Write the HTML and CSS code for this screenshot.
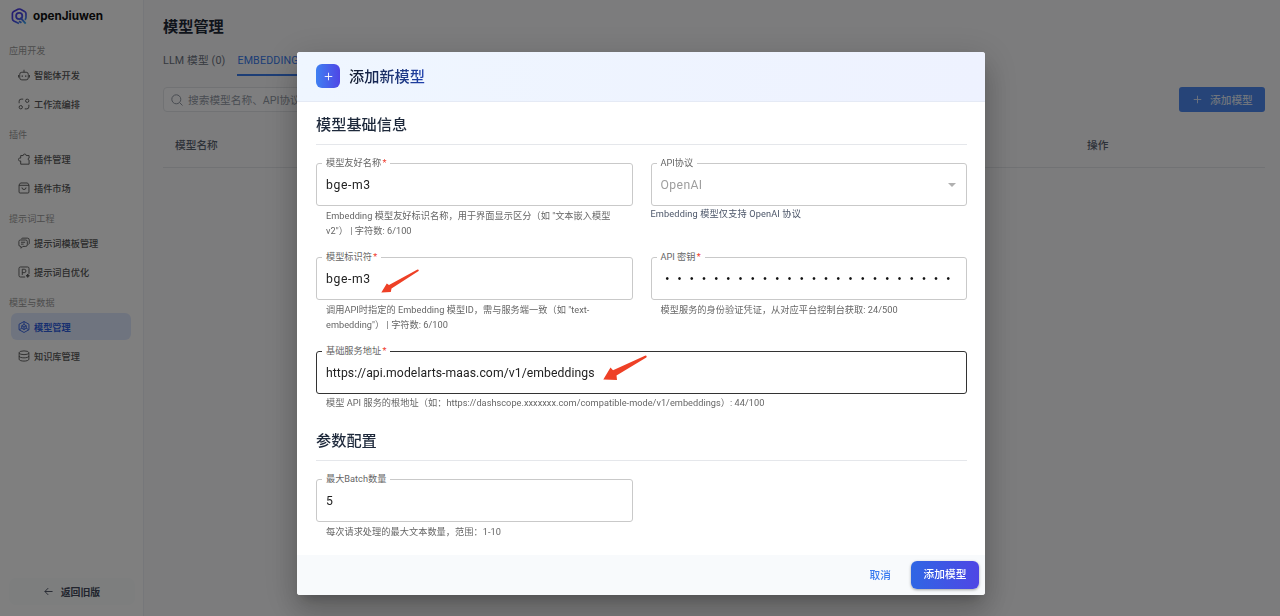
FILE: index.html
```html
<!DOCTYPE html>
<html lang="zh-CN">
<head>
    <meta charset="UTF-8">
    <meta name="viewport" content="width=device-width, initial-scale=1.0">
    <title>模型管理 - openJiuwen</title>
    <link rel="stylesheet" href="styles.css">
</head>
<body>
    <div class="app">
        <aside class="sidebar">
            <div class="logo">
                <svg width="17" height="17" viewBox="0 0 17 17" fill="none">
                    <defs>
                        <linearGradient id="logoGrad" x1="3" y1="1" x2="15" y2="17" gradientUnits="userSpaceOnUse">
                            <stop offset="0" stop-color="#4a35e0"/>
                            <stop offset="0.55" stop-color="#4a50e8"/>
                            <stop offset="1" stop-color="#35c0f0"/>
                        </linearGradient>
                    </defs>
                    <path d="M8 15.5L2.8 12.9Q1.4 12.2 1.4 10.7V5.6Q1.4 4.2 2.7 3.5L7 1.3Q8.3.7 9.6 1.3L13.6 3.5Q15 4.2 15 5.7V9.5Q15 11 13.8 11.8" stroke="url(#logoGrad)" stroke-width="1.7"/>
                    <circle cx="8.2" cy="8" r="3.1" stroke="url(#logoGrad)" stroke-width="1.8"/>
                    <path d="M9.4 9.7L14.7 15.6M8 13.2L10.5 14.8" stroke="url(#logoGrad)" stroke-width="1.9"/>
                </svg>
                <span>openJiuwen</span>
            </div>

            <nav class="menu">
                <div class="menu-title">应用开发</div>
                <a class="menu-item">
                    <svg viewBox="0 0 16 16"><rect x="2.3" y="4.3" width="11.4" height="10.2" rx="2.8"/><path d="M8 4.3V1M.6 8v3.4M15.4 8v3.4"/><path d="M5.7 8.6v1.7M10.3 8.6v1.7" stroke-width="1.7"/></svg>
                    <span>智能体开发</span>
                </a>
                <a class="menu-item">
                    <svg viewBox="0 0 16 16"><circle cx="12.3" cy="3.7" r="2.2"/><circle cx="3.7" cy="12.3" r="2.2"/><path d="M7 1.5H4.2Q1.5 1.5 1.5 4.2V7M9 14.5h2.8q2.7 0 2.7-2.7V9"/></svg>
                    <span>工作流编排</span>
                </a>

                <div class="menu-title">插件</div>
                <a class="menu-item">
                    <svg viewBox="0 0 16 16"><path d="M3.6 3.4h3.3a2 2 0 1 1 4 0h3.9v3.4a1.3 1.3 0 1 0 0 2.600v5.500H3.600v-4.300a2.100 2.100 0 1 1 0-3.800z"/></svg>
                    <span>插件管理</span>
                </a>
                <a class="menu-item">
                    <svg viewBox="0 0 16 16"><path d="M3.3 1.3h9.4l1.9 2.6v9.4q0 1.4-1.4 1.4H2.8q-1.4 0-1.4-1.4V3.9zM1.4 4.4h13.2M5.3 7.3a2.7 2.7 0 0 0 5.4 0"/></svg>
                    <span>插件市场</span>
                </a>

                <div class="menu-title">提示词工程</div>
                <a class="menu-item">
                    <svg viewBox="0 0 16 16"><path d="M3.2 4h7.2q2 0 2 2v4.5q0 2-2 2H6.5L4 15v-2.5h-.8q-2 0-2-2V6q0-2 2-2zM4 7h5.5M4 9.5h3.5M4.5 2.3q.5-.8 2-.8h6q2.5 0 2.500 2.500v4q0 1.500-1 2"/></svg>
                    <span>提示词模板管理</span>
                </a>
                <a class="menu-item">
                    <svg viewBox="0 0 16 16"><path d="M9.5 14.7H3.3q-2 0-2-2V3.3q0-2 2-2h9.4q2 0 2 2v7.2M5.7 12V4.3h2.6a2.3 2.3 0 0 1 0 4.6H5.7"/><path d="M13 10.8l.7 1.5 1.5.7-1.5.7-.7 1.5-.7-1.5-1.5-.7 1.5-.7z" fill="currentColor"/></svg>
                    <span>提示词自优化</span>
                </a>

                <div class="menu-title">模型与数据</div>
                <a class="menu-item active">
                    <svg viewBox="0 0 16 16"><path d="M8 .7l6.6 3.6v7.4L8 15.3l-6.6-3.6V4.3z"/><path d="M8 4.6l3 1.7v3.4l-3 1.7-3-1.7V6.3zM5 6.3l3 1.7 3-1.7M8 8v3.4M8 .9v3.7M1.8 11.6L5 9.7M14.2 11.6L11 9.7"/></svg>
                    <span>模型管理</span>
                </a>
                <a class="menu-item">
                    <svg viewBox="0 0 16 16"><ellipse cx="8" cy="3.7" rx="6.5" ry="2.5"/><path d="M1.5 3.7v8.6c0 3.3 13 3.3 13 0V3.7M1.5 8c0 3.3 13 3.3 13 0"/></svg>
                    <span>知识库管理</span>
                </a>
            </nav>

            <a class="back-btn">
                <svg viewBox="0 0 10 10"><path d="M9.5 5H1M4.7 1.2L1 5l3.7 3.8"/></svg>
                <span>返回旧版</span>
            </a>
        </aside>

        <main class="main">
            <h1>模型管理</h1>
            <div class="tabs">
                <div class="tab">LLM 模型 (0)</div>
                <div class="tab active">EMBEDDING 模型 (0)</div>
            </div>
            <div class="toolbar">
                <div class="search">
                    <svg viewBox="0 0 12 12"><circle cx="5.3" cy="5.3" r="4.5"/><path d="M8.6 8.6l2.9 2.9"/></svg>
                    <span>搜索模型名称、API协议</span>
                </div>
                <div class="add-btn">
                    <svg viewBox="0 0 10 10"><path d="M5 .8v8.4M.8 5h8.4"/></svg>
                    <span>添加模型</span>
                </div>
            </div>
            <div class="table-head">
                <div>模型名称</div>
                <div>操作</div>
            </div>
        </main>
    </div>

    <div class="overlay">
        <div class="dialog">
            <div class="dialog-header">
                <div class="dialog-icon">
                    <svg viewBox="0 0 10 10"><path d="M5 .8v8.4M.8 5h8.4"/></svg>
                </div>
                <div class="dialog-title">添加新模型</div>
            </div>

            <div class="dialog-body">
                <h2>模型基础信息</h2>
                <div class="form-grid">
                    <div class="field">
                        <div class="input"><label>模型友好名称 <i>*</i></label><span class="model">bge-m3</span></div>
                        <div class="help">Embedding 模型友好标识名称，用于界面显示区分（如 "文本嵌入模型<br>v2"） | 字符数: 6/100</div>
                    </div>
                    <div class="field">
                        <div class="input disabled">
                            <label>API协议</label><span>OpenAI</span>
                            <div class="caret"></div>
                        </div>
                        <div class="help flush">Embedding 模型仅支持 OpenAI 协议</div>
                    </div>
                    <div class="field">
                        <div class="input"><label>模型标识符 <i>*</i></label><span class="model">bge-m3</span></div>
                        <div class="help">调用API时指定的 Embedding 模型ID，需与服务端一致（如 "text-<br>embedding"） | 字符数: 6/100</div>
                    </div>
                    <div class="field">
                        <div class="input"><label>API 密钥 <i>*</i></label><span class="password">••••••••••••••••••••••••</span></div>
                        <div class="help">模型服务的身份验证凭证，从对应平台控制台获取: 24/500</div>
                    </div>
                    <div class="field wide">
                        <div class="input hover"><label>基础服务地址 <i>*</i></label><span>https://api.modelarts-maas.com/v1/embeddings</span></div>
                        <div class="help">模型 API 服务的根地址（如：https://dashscope.xxxxxxx.com/compatible-mode/v1/embeddings）: 44/100</div>
                    </div>
                </div>

                <h2 class="second">参数配置</h2>
                <div class="form-grid">
                    <div class="field">
                        <div class="input"><label>最大Batch数量</label><span>5</span></div>
                        <div class="help">每次请求处理的最大文本数量，范围：1-10</div>
                    </div>
                </div>
            </div>

            <div class="dialog-footer">
                <div class="cancel">取消</div>
                <div class="submit">添加模型</div>
            </div>

            <svg class="arrow arrow-id" viewBox="0 0 38 24"><path d="M36.500.6Q38.300.5 37.600 2L10.500 19.500 9.800 22.900.3 23.500 5.800 14.500 8 16z"/></svg>
            <svg class="arrow arrow-url" viewBox="0 0 44 26"><path d="M42.500.5Q44.300.6 43.300 2.600L13.500 20.500 14 25 .3 24.500 7.500 12.500 10 15.200z"/></svg>
        </div>
    </div>
</body>
</html>
```
FILE: styles.css
```css
* {
    box-sizing: border-box;
}
body {
    margin: 0;
    height: 616px;
    overflow: hidden;
    font-family: Roboto, "Noto Sans CJK SC", sans-serif;
    font-size: 10.7px;
    color: #1f2937;
}
svg {
    display: block;
    flex: none;
    fill: none;
    stroke: currentColor;
}
h1, h2 {
    margin: 0;
    font-weight: 500;
}
.app {
    display: flex;
    height: 616px;
}

/* sidebar */
.sidebar {
    width: 144px;
    flex: none;
    display: flex;
    flex-direction: column;
    background: #fff;
    border-right: 1px solid #eceef4;
}
.logo {
    display: flex;
    align-items: center;
    gap: 5px;
    height: 32px;
    padding-left: 11px;
    font-family: Inter, sans-serif;
    font-size: 11.7px;
    font-weight: 700;
    color: #111;
}
.logo svg {
    stroke: none;
}
.menu {
    flex: 1;
    padding: 5px 12px 0 11px;
}
.menu-title {
    height: 24px;
    line-height: 28px;
    margin-left: -2px;
    font-size: 9.1px;
    color: #9a9a9a;
}
.menu-item {
    display: flex;
    align-items: center;
    gap: 4px;
    height: 27px;
    margin-bottom: 2px;
    padding-left: 7px;
    border-radius: 6px;
    font-size: 9.2px;
    font-weight: 500;
    color: #555;
}
.menu-item + .menu-title {
    margin-top: 4px;
}
.menu-item svg {
    width: 12px;
    height: 12px;
    stroke-width: 1.2;
}
.menu-item.active {
    background: #dfe8ff;
    color: #2f5fe0;
    font-weight: 700;
}
.back-btn {
    display: flex;
    align-items: center;
    justify-content: center;
    gap: 8px;
    height: 27px;
    margin: 0 8px 11px 9px;
    border-radius: 7px;
    background: #fafcfd;
    font-size: 9.9px;
    font-weight: 700;
    color: #444b5c;
}
.back-btn svg {
    width: 9px;
    height: 9px;
}

/* main */
.main {
    flex: 1;
    padding: 16px 15px 0 19px;
    background: #f9f9fb;
}
h1 {
    font-size: 15.2px;
    line-height: 22px;
    font-weight: 700;
}
.tabs {
    display: flex;
    gap: 12px;
    height: 38px;
    padding-top: 10px;
}
.tab {
    height: 28px;
    line-height: 25px;
    font-size: 10.7px;
    letter-spacing: 0.15px;
    color: #6b7280;
}
.tab.active {
    color: #3b7cec;
    border-bottom: 2px solid #3b7cec;
}
.toolbar {
    display: flex;
    align-items: center;
    justify-content: space-between;
    margin-top: 11px;
}
.search {
    display: flex;
    align-items: center;
    gap: 5px;
    width: 244px;
    height: 25px;
    padding-left: 7px;
    border: 1px solid #e2e4e8;
    border-radius: 4px;
    background: #fdfdfe;
    color: #9299a5;
}
.search svg {
    width: 12px;
    height: 12px;
}
.add-btn {
    display: flex;
    align-items: center;
    gap: 8px;
    height: 25px;
    width: 86px;
    padding-left: 14px;
    border-radius: 3px;
    background: #4c88f0;
    color: #dfe8fa;
    font-weight: 500;
}
.add-btn svg {
    width: 9px;
    height: 9px;
}
.table-head {
    display: grid;
    grid-template-columns: 912px 1fr;
    align-items: center;
    height: 45px;
    margin-top: 11px;
    padding: 0 12px 1px;
    border-bottom: 1px solid #e2e4e8;
    font-weight: 500;
    color: #5b6472;
}

/* dialog */
.overlay {
    position: fixed;
    inset: 0;
    padding: 52px 0 0 297px;
    background: rgba(0, 0, 0, 0.5);
}
.dialog {
    position: relative;
    display: flex;
    flex-direction: column;
    width: 688px;
    height: 543px;
    border-radius: 3px;
    background: #fff;
    box-shadow: 0 8px 11px -5px rgba(0,0,0,0.2), 0 18px 29px 2px rgba(0,0,0,0.14), 0 7px 35px 6px rgba(0,0,0,0.12);
}
.dialog-header {
    display: flex;
    flex: none;
    align-items: center;
    gap: 9px;
    height: 50px;
    padding: 0 0 1px 19px;
    border-bottom: 1px solid #e5eaf5;
    border-radius: 3px 3px 0 0;
    background: linear-gradient(90deg, #eff6ff, #eef2ff);
}
.dialog-icon {
    display: flex;
    align-items: center;
    justify-content: center;
    width: 24px;
    height: 24px;
    border-radius: 6px;
    background: linear-gradient(90deg, #3f80f2, #4f46e5);
    color: #fff;
}
.dialog-icon svg {
    width: 9px;
    height: 9px;
}
.dialog-title {
    margin-top: -2px;
    font-size: 15.2px;
    font-weight: 500;
    background: linear-gradient(90deg, #111827, #1e3a8a 75%, #1e40af);
    -webkit-background-clip: text;
    background-clip: text;
    color: transparent;
}
.dialog-body {
    flex: 1;
    min-height: 0;
    padding: 0 18px 0 19px;
}
h2 {
    height: 43px;
    margin-bottom: 18px;
    padding-top: 12px;
    border-bottom: 1px solid #e5e7eb;
    font-size: 15.2px;
    line-height: 22px;
    color: #1e293b;
}
h2.second {
    height: 42px;
    margin-top: 8px;
    padding-top: 11px;
}
.form-grid {
    display: grid;
    grid-template-columns: minmax(0, 1fr) minmax(0, 1fr);
    gap: 18px;
}
.field.wide {
    grid-column: 1 / 3;
}
.input {
    position: relative;
    display: flex;
    align-items: center;
    height: 43px;
    padding: 0 10px 0 9px;
    border: 1px solid #c9c9c9;
    border-radius: 3px;
    font-size: 12.2px;
    letter-spacing: 0.08px;
    color: #222;
}
.input .model {
    letter-spacing: 0.6px;
}
.input.hover {
    border-color: #333;
}
.input.disabled {
    justify-content: space-between;
    letter-spacing: 0.4px;
    color: #9e9e9e;
}
/* label sits on the border line */
.input label {
    position: absolute;
    top: -9px;
    left: 5px;
    padding: 0 4px;
    background: #fff;
    font-size: 9.2px;
    line-height: 15px;
    letter-spacing: 0;
    color: #666;
    white-space: nowrap;
}
.input label i {
    margin-left: -1px;
    font-style: normal;
    color: #ef3b2d;
}
.caret {
    border: 4px solid transparent;
    border-top-color: #b0b0b0;
    border-bottom: 0;
}
.password {
    padding-left: 5px;
    font-family: "Liberation Sans", sans-serif;
    font-size: 10px;
    letter-spacing: 8.72px;
    color: #111;
    white-space: nowrap;
}
.help {
    height: 33px;
    padding: 2px 0 0 10px;
    font-size: 9.2px;
    line-height: 15.2px;
    letter-spacing: 0.03px;
    color: #666;
    white-space: nowrap;
}
.help.flush {
    padding: 0;
    letter-spacing: 0.13px;
    color: #4b5568;
}
.wide .help {
    height: 17px;
    padding-top: 1px;
}
.dialog-footer {
    display: flex;
    flex: none;
    align-items: center;
    justify-content: flex-end;
    gap: 20px;
    height: 40px;
    padding: 0 6px 1px 0;
    border-radius: 0 0 3px 3px;
    background: #f8fafc;
    font-size: 10.7px;
    font-weight: 500;
}
.cancel {
    color: #3b7cf0;
}
.submit {
    width: 68px;
    height: 28px;
    border-radius: 6px;
    background: linear-gradient(90deg, #2f66e4, #4f46e5);
    box-shadow: 0 1px 3px rgba(0,0,0,0.35);
    color: #fff;
    line-height: 27px;
    text-align: center;
}

/* red pointers over the form */
.arrow {
    position: absolute;
    fill: #ee4026;
    stroke: none;
}
.arrow-id {
    left: 84px;
    top: 217px;
    width: 38px;
    height: 24px;
}
.arrow-url {
    left: 306px;
    top: 303px;
    width: 44px;
    height: 26px;
}
```
